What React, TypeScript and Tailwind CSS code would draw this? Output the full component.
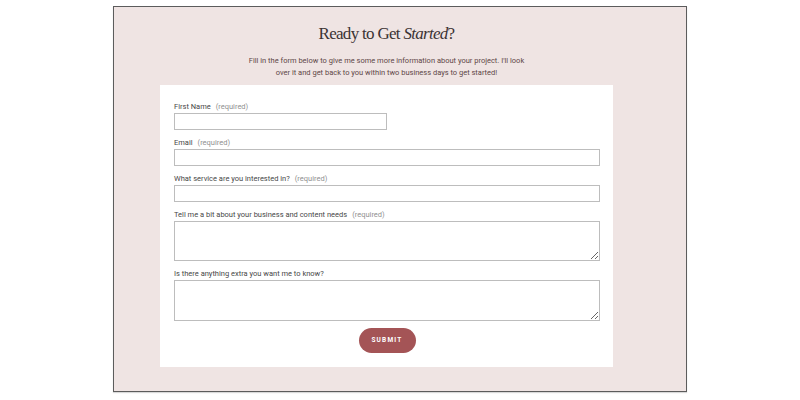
import React from "react";

const sans = { fontFamily: "Roboto, 'Liberation Sans', sans-serif" };

function Label({ text, required }: { text: string; required?: boolean }) {
  return (
    <div className="h-[11px] text-[7.5px] leading-[11px] text-[#474747]">
      {text}
      {required && <span className="ml-[5px] text-[#909090]">(required)</span>}
    </div>
  );
}

export default function App() {
  return (
    <div className="h-[400px] w-[800px] bg-white pl-[113px] pt-[6px]" style={sans}>
      <div className="h-[386px] w-[574px] border border-[#5c5c5c] bg-[#efe4e3] pl-[46px] shadow-[0_1px_1px_rgba(0,0,0,0.15)]">
        <div className="flex w-[453px] flex-col items-center">
          <h1
            className="mt-[16px] text-[17px] leading-[22px] tracking-[-0.7px] text-[#3b3334]"
            style={{ fontFamily: "'Liberation Serif', serif" }}
          >
            Ready to Get <em>Started</em>?
          </h1>
          <p className="mt-[10px] w-[280px] text-center text-[7.5px] leading-[12px] text-[#5e4646]">
            Fill in the form below to give me some more information about your project. I'll look over it and get back
            to you within two business days to get started!
          </p>
          <form className="mt-[6px] flex h-[282px] w-[453px] flex-col gap-[1px] bg-white pl-[14px] pr-[13px] pt-[16px]">
            <Label text="First Name" required />
            <input className="block h-[17px] w-[213px] border border-[#bdbdbd] outline-none" />
            <div className="mt-[6px]">
              <Label text="Email" required />
            </div>
            <input className="block h-[17px] w-full border border-[#bdbdbd] outline-none" />
            <div className="mt-[6px]">
              <Label text="What service are you interested in?" required />
            </div>
            <input className="block h-[17px] w-full border border-[#bdbdbd] outline-none" />
            <div className="mt-[6px]">
              <Label text="Tell me a bit about your business and content needs" required />
            </div>
            <textarea className="block h-[40px] w-full resize-y border border-[#bdbdbd] outline-none" />
            <div className="mt-[6px]">
              <Label text="Is there anything extra you want me to know?" />
            </div>
            <textarea className="block h-[41px] w-full resize-y border border-[#bdbdbd] outline-none" />
            <button
              type="button"
              className="mx-auto mt-[6px] h-[25px] w-[57px] rounded-full bg-[#a45456] text-[6.5px] font-bold tracking-[1.2px] text-white"
            >
              SUBMIT
            </button>
          </form>
        </div>
      </div>
    </div>
  );
}
